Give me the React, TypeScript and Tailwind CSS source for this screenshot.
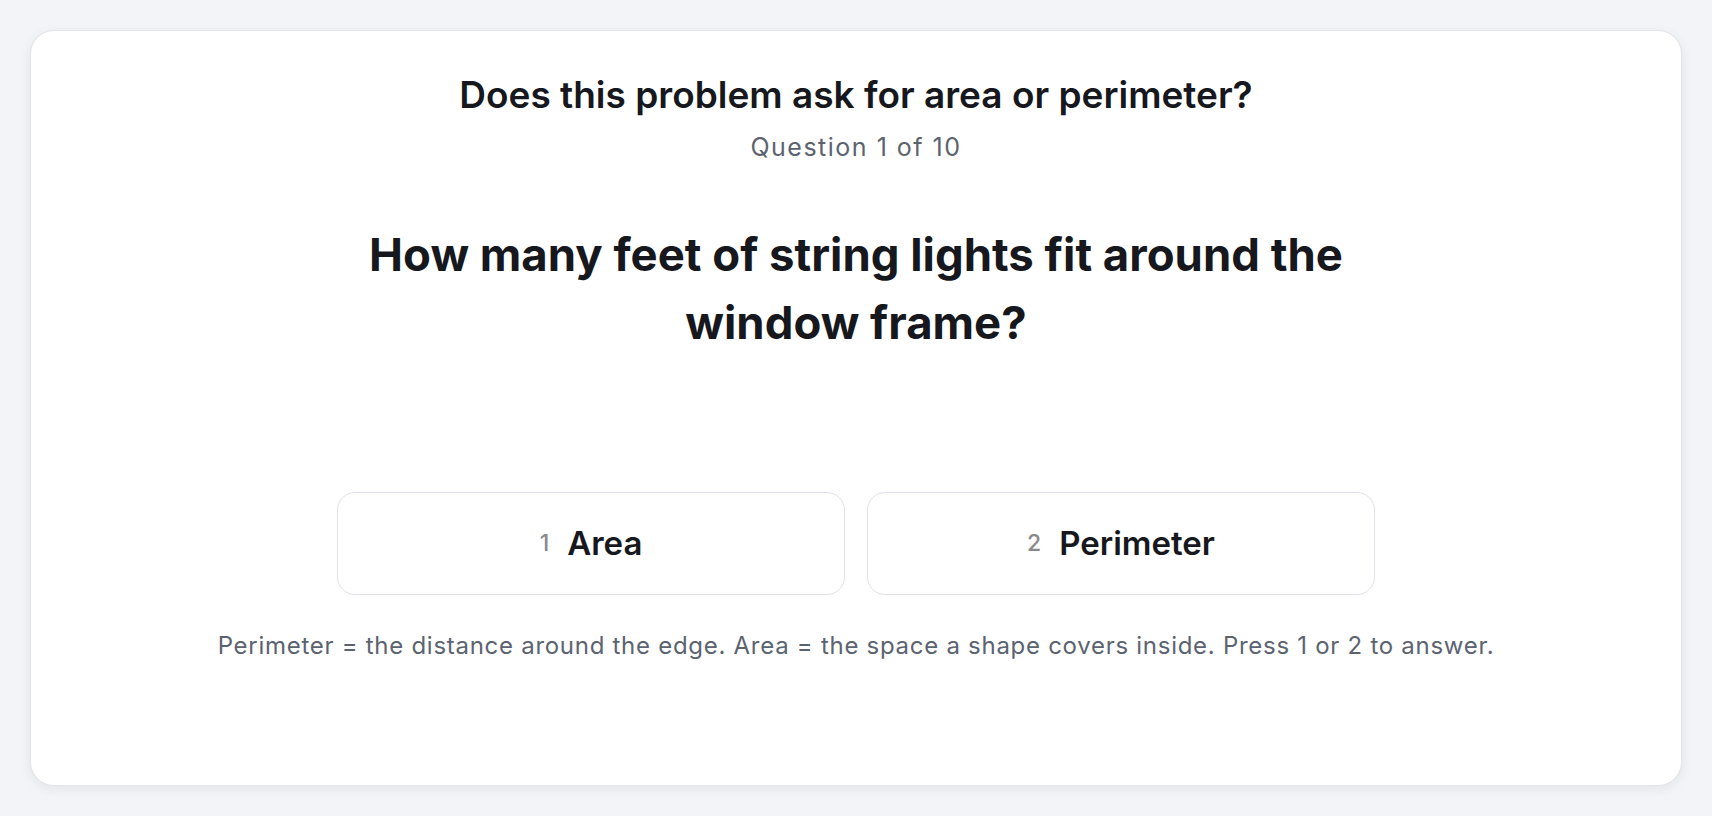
const OPTIONS = [
  { key: "1", label: "Area" },
  { key: "2", label: "Perimeter" },
];

export default function App() {
  return (
    <div
      className="min-h-screen bg-[#f3f4f7] p-[30px]"
      style={{ fontFamily: "Inter, 'Noto Sans', sans-serif" }}
    >
      <div className="flex h-[756px] flex-col items-center rounded-[24px] border border-[#e2e4e9] bg-white pt-[42px] shadow-[0_3px_12px_rgba(16,24,40,0.07)]">
        <h1 className="text-[37px] font-semibold leading-[44px] text-[#16181d]">
          Does this problem ask for area or perimeter?
        </h1>
        <p className="mt-[14px] text-[25px] leading-[32px] tracking-[0.06em] text-[#5c6370]">
          Question 1 of 10
        </p>

        <h2 className="mt-[58px] max-w-[1010px] text-center text-[45.5px] font-bold leading-[68px] text-[#16181d]">
          How many feet of string lights fit around the window frame?
        </h2>

        <div className="mt-[135px] flex gap-[22px]">
          {OPTIONS.map((opt) => (
            <button
              key={opt.key}
              className="flex h-[103px] w-[508px] items-center justify-center gap-[18px] rounded-[18px] border border-[#dfe1e6] bg-white"
            >
              <span className="text-[23px] font-medium text-[#8a8a8e]">{opt.key}</span>
              <span className="text-[33px] font-semibold text-[#16181d]">{opt.label}</span>
            </button>
          ))}
        </div>

        <p className="mt-[35px] text-[24px] leading-[32px] tracking-[0.03em] text-[#5c6370]">
          Perimeter = the distance around the edge. Area = the space a shape covers inside. Press 1 or 2 to answer.
        </p>
      </div>
    </div>
  );
}
